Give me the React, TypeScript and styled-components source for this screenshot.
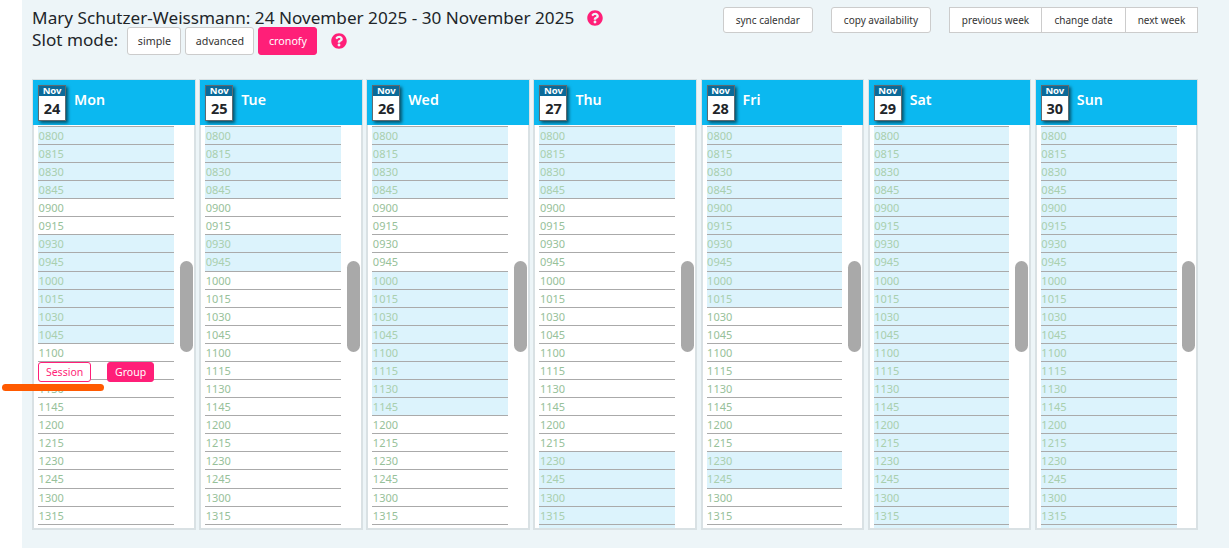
import React from "react";
import styled, { createGlobalStyle } from "styled-components";
import { FaQuestionCircle } from "react-icons/fa";

const Global = createGlobalStyle`
  html, body { margin: 0; padding: 0; background: #fff; }
  body { font-family: "Noto Sans", "Open Sans", sans-serif; color: #212529; }
  * { box-sizing: border-box; }
`;

const Page = styled.div`
  position: relative;
  width: 1229px;
  height: 548px;
  overflow: hidden;
  padding-left: 22px;
`;
const Main = styled.main`
  height: 548px;
  background: #edf5f8;
  padding: 0 31px 0 10.1px;
`;
const Toolbar = styled.div`
  height: 79px;
  display: flex;
  justify-content: space-between;
  align-items: flex-start;
`;
const Heading = styled.div`
  padding-top: 7px;
  display: flex;
  flex-direction: column;
`;
const TitleRow = styled.div`
  display: flex;
  align-items: center;
  height: 22px;
`;
const Title = styled.h1`
  margin: 0;
  font-size: 17.15px;
  font-weight: 400;
  line-height: 22px;
  white-space: nowrap;
`;
const Help = styled.span<{ $gap: number }>`
  display: inline-flex;
  margin-left: ${(p) => p.$gap}px;
  color: #ff1f78;
  font-size: 16px;
`;
const ModeRow = styled.div`
  display: flex;
  align-items: center;
  height: 28px;
  margin-top: -2px;
  gap: 4px;
`;
const ModeLabel = styled.span`
  width: 91.4px;
  font-size: 17.15px;
  font-weight: 400;
  line-height: 22px;
  margin-top: -2px;
  white-space: nowrap;
`;
const ModeButton = styled.button<{ $active?: boolean; $width: number }>`
  width: ${(p) => p.$width}px;
  height: 28px;
  padding: 0;
  font: 10.7px "Noto Sans", sans-serif;
  border-radius: 3px;
  border: 1px solid ${(p) => (p.$active ? "#ff1f78" : "#ccc")};
  background: ${(p) => (p.$active ? "#ff1f78" : "#fff")};
  color: ${(p) => (p.$active ? "#fff" : "#333")};
`;
const Actions = styled.div`
  display: flex;
  padding-top: 7px;
`;
const ActionButton = styled.button`
  height: 26px;
  padding: 0 12px;
  margin-right: 18px;
  font: 10px "Noto Sans", sans-serif;
  white-space: nowrap;
  border-radius: 3px;
  border: 1px solid #ccc;
  background: #fff;
  color: #333;
`;
const WeekGroup = styled.div`
  display: flex;
  height: 26px;
  width: 249px;
  border: 1px solid #ccc;
  background: #fff;
`;
const WeekButton = styled.button<{ $width: number }>`
  width: ${(p) => p.$width}px;
  padding: 0;
  font: 10px "Noto Sans", sans-serif;
  white-space: nowrap;
  border: 0;
  background: transparent;
  color: #333;
  & + & { border-left: 1px solid #ccc; }
`;
const Days = styled.div`
  display: grid;
  grid-template-columns: repeat(7, 163.5px);
  gap: 3.64px;
`;
const Day = styled.section`
  position: relative;
  height: 451px;
  border: 2px solid #d9e1e4;
  background: #fff;
  display: flex;
  flex-direction: column;
`;
const DayHeader = styled.header`
  margin: -1px -1px 0;
  height: 45px;
  flex: none;
  background: #0bb8f0;
  display: flex;
  align-items: center;
  padding-left: 5px;
`;
const CalBadge = styled.div`
  width: 28px;
  height: 36px;
  border: 1px solid #5e6a70;
  background: #fff;
  box-shadow: 2px 2px 3px rgba(0, 0, 0, 0.55);
  display: flex;
  flex-direction: column;
  align-items: center;
  margin-right: 8px;
`;
const CalMonth = styled.div`
  width: 100%;
  height: 10px;
  background: #0a6a99;
  color: #fff;
  font-size: 9.5px;
  font-weight: 700;
  line-height: 10px;
  text-align: center;
`;
const CalDate = styled.div`
  font-size: 14.5px;
  font-weight: 700;
  line-height: 25px;
  color: #212529;
`;
const DayName = styled.span`
  color: #fff;
  font-size: 14.2px;
  font-weight: 600;
  margin-top: -7px;
`;
const Slots = styled.div`
  flex: 1;
  min-height: 0;
  overflow: hidden;
  padding: 0.95px 0 0 4px;
`;
const Slot = styled.div<{ $free: boolean }>`
  position: relative;
  width: 135.7px;
  height: 18.09px;
  border-top: 1px solid #aaa;
  padding-left: 0.5px;
  background: ${(p) => (p.$free ? "#dcf3fc" : "transparent")};
  color: ${(p) => (p.$free ? "#a9cfae" : "#97c19a")};
  font-size: 11px;
  line-height: 17px;
`;
const SlotEnd = styled.div<{ $free: boolean }>`
  width: 135.7px;
  height: 18px;
  border-top: 1px solid #aaa;
  background: ${(p) => (p.$free ? "#dcf3fc" : "transparent")};
`;
const SlotActions = styled.div`
  position: absolute;
  left: 0;
  top: 0;
  display: flex;
  gap: 16px;
  z-index: 2;
`;
const SlotButton = styled.button<{ $solid?: boolean }>`
  width: ${(p) => (p.$solid ? 47 : 53)}px;
  height: 20px;
  padding: 0;
  font: 10.5px "Noto Sans", sans-serif;
  border-radius: 3px;
  border: 1px solid #ff1f78;
  background: ${(p) => (p.$solid ? "#ff1f78" : "#fff")};
  color: ${(p) => (p.$solid ? "#fff" : "#ff1f78")};
`;
const Thumb = styled.div`
  position: absolute;
  right: 1px;
  top: 180px;
  width: 13px;
  height: 91px;
  border-radius: 7px;
  background: #a9a9a9;
`;
const Annotation = styled.div`
  position: absolute;
  left: 2px;
  top: 383.5px;
  width: 102px;
  height: 7.5px;
  border-radius: 4px;
  background: #ff5a00;
  z-index: 3;
`;

const times: string[] = [];
for (let h = 8; h <= 13; h++) {
  for (const m of ["00", "15", "30", "45"]) {
    times.push(`${String(h).padStart(2, "0")}${m}`);
  }
}
const visible = times.slice(0, 22);

const range = (a: number, b: number) => Array.from({ length: b - a + 1 }, (_, i) => a + i);

const days = [
  { name: "Mon", date: 24, free: [...range(0, 3), ...range(6, 11)] },
  { name: "Tue", date: 25, free: [...range(0, 3), ...range(6, 7)] },
  { name: "Wed", date: 26, free: [...range(0, 3), ...range(8, 15)] },
  { name: "Thu", date: 27, free: [...range(0, 3), ...range(18, 22)] },
  { name: "Fri", date: 28, free: [...range(0, 9), ...range(18, 19)] },
  { name: "Sat", date: 29, free: range(0, 22) },
  { name: "Sun", date: 30, free: range(0, 22) },
];

export default function App() {
  return (
    <Page>
      <Global />
      <Main>
        <Toolbar>
          <Heading>
            <TitleRow>
              <Title>Mary Schutzer-Weissmann: 24 November 2025 - 30 November 2025</Title>
              <Help $gap={13}><FaQuestionCircle /></Help>
            </TitleRow>
            <ModeRow>
              <ModeLabel>Slot mode:</ModeLabel>
              <ModeButton $width={54}>simple</ModeButton>
              <ModeButton $width={69}>advanced</ModeButton>
              <ModeButton $width={59} $active>cronofy</ModeButton>
              <Help $gap={10}><FaQuestionCircle /></Help>
            </ModeRow>
          </Heading>
          <Actions>
            <ActionButton>sync calendar</ActionButton>
            <ActionButton>copy availability</ActionButton>
            <WeekGroup>
              <WeekButton $width={91}>previous week</WeekButton>
              <WeekButton $width={84}>change date</WeekButton>
              <WeekButton $width={72}>next week</WeekButton>
            </WeekGroup>
          </Actions>
        </Toolbar>
        <Days>
          {days.map((d, di) => (
            <Day key={d.name}>
              <DayHeader>
                <CalBadge>
                  <CalMonth>Nov</CalMonth>
                  <CalDate>{d.date}</CalDate>
                </CalBadge>
                <DayName>{d.name}</DayName>
              </DayHeader>
              <Slots>
                {visible.map((t, i) => (
                  <Slot key={t} $free={d.free.includes(i)}>
                    {t}
                    {di === 0 && i === 13 && (
                      <SlotActions>
                        <SlotButton>Session</SlotButton>
                        <SlotButton $solid>Group</SlotButton>
                      </SlotActions>
                    )}
                  </Slot>
                ))}
                <SlotEnd $free={d.free.includes(22)} />
              </Slots>
              <Thumb />
            </Day>
          ))}
        </Days>
      </Main>
      <Annotation />
    </Page>
  );
}
